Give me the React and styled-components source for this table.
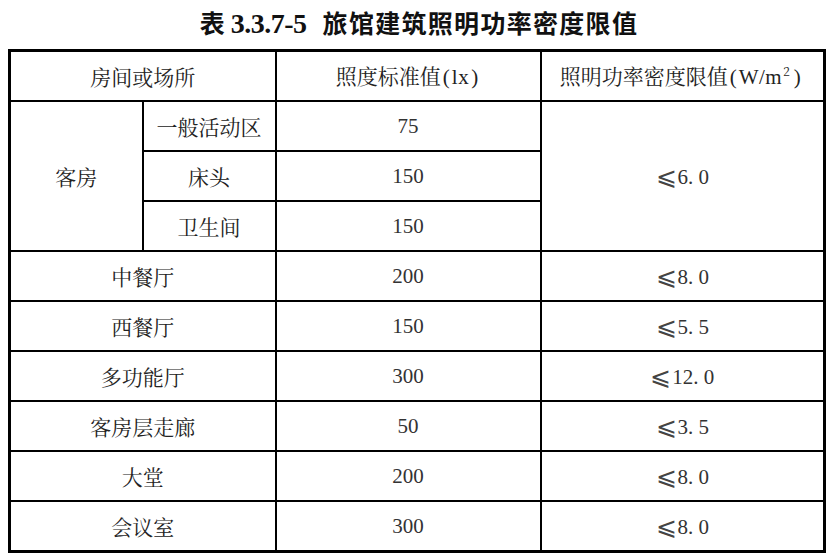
import React from "react";
import styled, { createGlobalStyle } from "styled-components";

const Global = createGlobalStyle`
  html, body { margin: 0; padding: 0; background: #fff; }
  body { width: 834px; height: 558px; overflow: hidden; }
`;

const Page = styled.div`
  padding: 5px 8px 0 8px;
  display: flex;
  flex-direction: column;
  align-items: stretch;
`;

const Title = styled.h1`
  margin: 0;
  height: 34px;
  display: flex;
  justify-content: center;
  align-items: center;
  gap: 16px;
  font-size: 25px;
  font-weight: 700;
  color: #111;
  font-family: "Noto Sans CJK SC", sans-serif;
  padding-left: 4px;
`;

const TitleLead = styled.span`
  display: flex;
  align-items: baseline;
  gap: 6px;
`;

const TitleNum = styled.span`
  font-family: "Liberation Serif", serif;
  font-weight: 700;
  font-size: 28px;
  letter-spacing: -0.5px;
`;

const TitleText = styled.span`
  letter-spacing: 1.3px;
`;

const Table = styled.table`
  margin-top: 10px;
  width: 817px;
  table-layout: fixed;
  border-collapse: collapse;
  border: 3px solid #000;
  font-size: 21px;
  color: #222;
`;

const Cell = styled.td`
  border: 2px solid #000;
  height: ${(p) => p.$h || 48}px;
  padding: 0;
  text-align: center;
  vertical-align: middle;
  color: ${(p) => (p.$num ? "#333" : "#222")};
  font-family: ${(p) =>
    p.$num
      ? '"Liberation Serif", "Noto Sans CJK SC", serif'
      : '"Noto Serif CJK SC", "Noto Sans CJK SC", serif'};
  font-size: 21px;
  line-height: 1;
`;

const Le = styled.span`
  font-family: "DejaVu Sans", "Noto Sans CJK SC", sans-serif;
  font-size: 25px;
  font-weight: 300;
  color: #444;
  margin-right: 1px;
  vertical-align: -1px;
`;

const Latin = styled.span`
  font-family: "Liberation Serif", serif;
  font-size: 21px;
  letter-spacing: 0.5px;
`;

const Paren = styled.span`
  font-family: "Liberation Serif", serif;
  margin: 0 ${(p) => (p.$wide ? 4 : 2)}px;
`;

const Sup = styled.sup`
  font-size: 12px;
  vertical-align: 8px;
  line-height: 0;
  margin-left: 1px;
`;

const Val = ({ v }) => (
  <>
    <Le>⩽</Le>
    {v}
  </>
);

const rows = [
  ["中餐厅", "200", "8. 0"],
  ["西餐厅", "150", "5. 5"],
  ["多功能厅", "300", "12. 0"],
  ["客房层走廊", "50", "3. 5"],
  ["大堂", "200", "8. 0"],
  ["会议室", "300", "8. 0"],
];

export default function App() {
  return (
    <Page>
      <Global />
      <Title>
        <TitleLead>
          表<TitleNum>3.3.7-5</TitleNum>
        </TitleLead>
        <TitleText>旅馆建筑照明功率密度限值</TitleText>
      </Title>
      <Table>
        <colgroup>
          <col style={{ width: 133 }} />
          <col style={{ width: 133 }} />
          <col style={{ width: 265 }} />
          <col style={{ width: 284 }} />
        </colgroup>
        <tbody>
          <tr>
            <Cell colSpan={2} $h={48}>房间或场所</Cell>
            <Cell $h={48}>
              照度标准值<Paren>(</Paren>
              <Latin>lx</Latin>
              <Paren>)</Paren>
            </Cell>
            <Cell $h={48}>
              照明功率密度限值<Paren>(</Paren>
              <Latin>W/m</Latin>
              <Sup>2</Sup>
              <Paren $wide>)</Paren>
            </Cell>
          </tr>
          <tr>
            <Cell rowSpan={3}>客房</Cell>
            <Cell>一般活动区</Cell>
            <Cell $num>75</Cell>
            <Cell $num rowSpan={3}>
              <Val v="6. 0" />
            </Cell>
          </tr>
          <tr>
            <Cell>床头</Cell>
            <Cell $num>150</Cell>
          </tr>
          <tr>
            <Cell>卫生间</Cell>
            <Cell $num>150</Cell>
          </tr>
          {rows.map(([name, lx, w], i) => (
            <tr key={name}>
              <Cell colSpan={2} $h={i === rows.length - 1 ? 45 : 48}>{name}</Cell>
              <Cell $num>{lx}</Cell>
              <Cell $num>
                <Val v={w} />
              </Cell>
            </tr>
          ))}
        </tbody>
      </Table>
    </Page>
  );
}
